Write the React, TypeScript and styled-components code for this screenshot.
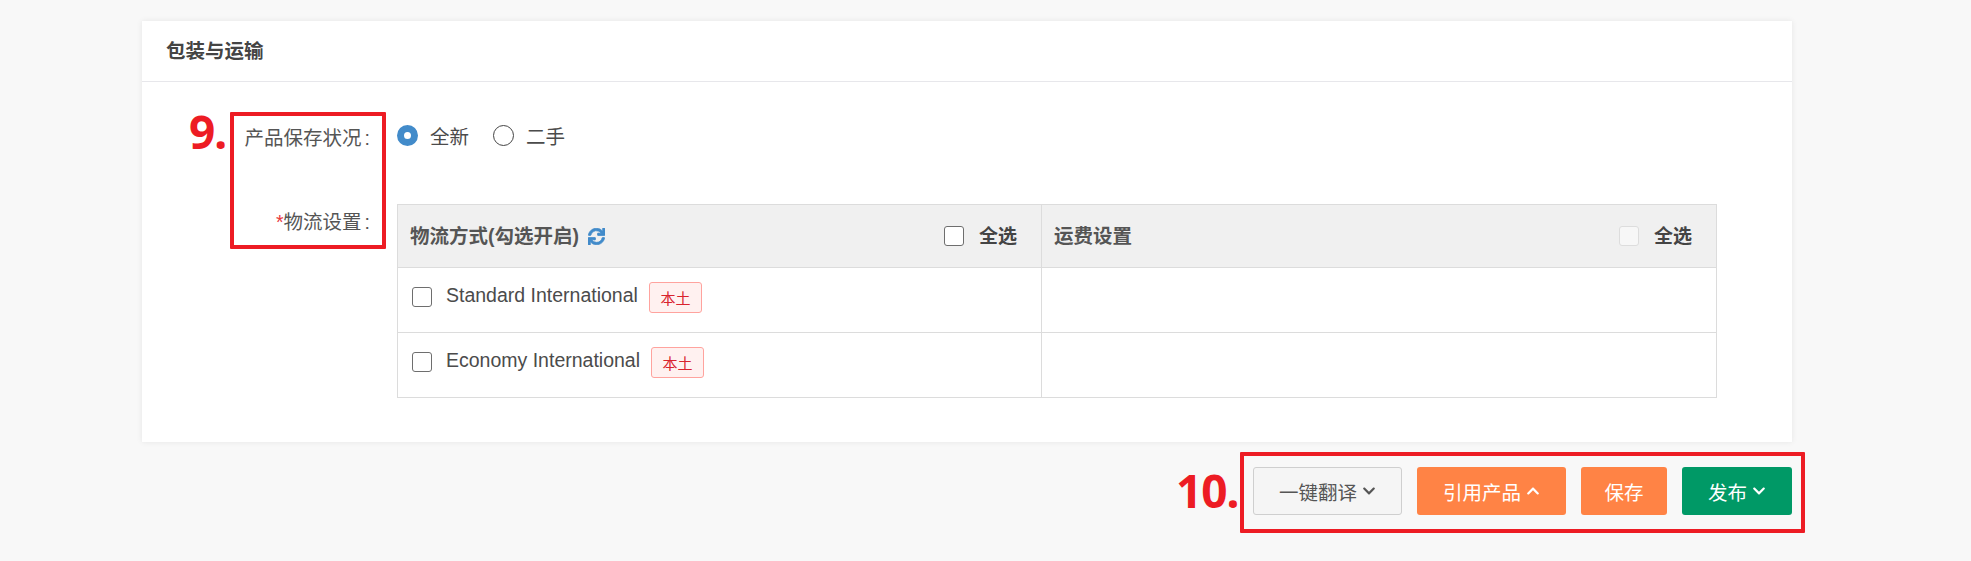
import React from "react";
import styled, { createGlobalStyle } from "styled-components";
import { FaChevronDown, FaChevronUp, FaSync } from "react-icons/fa";

const GlobalStyle = createGlobalStyle`
  html, body {
    margin: 0;
    padding: 0;
    background: #f8f8f8;
    font-family: "Liberation Sans", "Noto Sans CJK SC", sans-serif;
    color: #4b4b4b;
  }
`;

const Page = styled.div`
  position: relative;
  width: 1971px;
  height: 561px;
  padding: 21px 179px 0 142px;
  box-sizing: border-box;
  overflow: hidden;
`;

const Card = styled.section`
  background: #fff;
  height: 421px;
  box-shadow: 0 0 6px rgba(0, 0, 0, 0.08);
`;

const CardHeader = styled.header`
  height: 57px;
  padding: 0 0 3px 24px;
  display: flex;
  align-items: center;
  border-bottom: 1px solid #e7e7eb;
  font-size: 19.5px;
  font-weight: 700;
  color: #444;
`;

const CardBody = styled.div`
  padding-top: 34px;
  display: flex;
  flex-direction: column;
`;

const Field = styled.div<{ $height: number }>`
  display: grid;
  grid-template-columns: 228px 1fr;
  column-gap: 27px;
  height: ${(p) => p.$height}px;
`;

const FieldLabel = styled.label<{ $top: number }>`
  text-align: right;
  font-size: 19.5px;
  line-height: 28px;
  padding-top: ${(p) => p.$top}px;
  color: #555;
`;

const Required = styled.span`
  color: #e8383d;
`;

const Colon = styled.span`
  margin-left: 3px;
`;

const RadioRow = styled.div`
  display: flex;
  align-items: center;
  align-self: start;
  height: 28px;
  margin-top: 5px;
  gap: 24px;
`;

const RadioItem = styled.span`
  display: flex;
  align-items: center;
  gap: 12px;
  font-size: 19.5px;
`;

const RadioDot = styled.span<{ $on?: boolean }>`
  width: 21px;
  height: 21px;
  box-sizing: border-box;
  border-radius: 50%;
  background: #fff;
  border: ${(p) => (p.$on ? "7px solid #428bca" : "1px solid #444")};
`;

const ShipTable = styled.div`
  width: 1320px;
  height: 194px;
  border: 1px solid #dcdcdc;
  box-sizing: border-box;
`;

const TableRow = styled.div<{ $head?: boolean }>`
  display: grid;
  grid-template-columns: 643px 1fr;
  height: ${(p) => (p.$head ? 63 : 65)}px;
  box-sizing: border-box;
  background: ${(p) => (p.$head ? "#f0f0f0" : "#fff")};
  border-bottom: 1px solid #dcdcdc;
  &:last-child {
    border-bottom: 0;
    height: 64px;
  }
`;

const HeadCell = styled.div`
  display: flex;
  align-items: center;
  padding: 0 24px 0 12px;
  font-weight: 700;
  color: #555;
  & + & {
    border-left: 1px solid #dcdcdc;
  }
`;

const HeadTitle = styled.span`
  flex: 1;
  display: flex;
  align-items: center;
  gap: 9px;
  font-size: 19.5px;
`;

const HeadText = styled.span`
  position: relative;
  top: -2px;
`;

const SyncIcon = styled(FaSync)`
  color: #428bca;
  font-size: 17px;
  stroke: currentColor;
  stroke-width: 24;
`;

const SelectAll = styled.span`
  display: flex;
  align-items: center;
  gap: 15px;
  font-size: 19px;
  color: #444;
`;

const CheckBox = styled.span<{ $disabled?: boolean }>`
  width: 20px;
  height: 20px;
  flex: none;
  box-sizing: border-box;
  border-radius: 3px;
  background: ${(p) => (p.$disabled ? "#f7f7f7" : "#fff")};
  border: 1px solid ${(p) => (p.$disabled ? "#dddddd" : "#6e6e6e")};
`;

const MethodCell = styled.div`
  display: flex;
  align-items: center;
  padding: 0 0 6px 14px;
`;

const MethodName = styled.span`
  margin-left: 14px;
  font-size: 19.5px;
  position: relative;
  top: -2px;
`;

const LocalTag = styled.span`
  margin-left: 11px;
  width: 53px;
  height: 31px;
  box-sizing: border-box;
  display: flex;
  align-items: center;
  justify-content: center;
  font-size: 15px;
  color: #d9232d;
  background: #fff1f0;
  border: 1px solid #ffa39e;
  border-radius: 3px;
`;

const RateCell = styled.div`
  border-left: 1px solid #dcdcdc;
`;

const ActionBar = styled.div`
  display: flex;
  justify-content: flex-end;
  gap: 15px;
  margin-top: 25px;
`;

const ActionButton = styled.button<{ $tone: "plain" | "orange" | "green"; $width: number }>`
  width: ${(p) => p.$width}px;
  height: 48px;
  padding: 0;
  display: flex;
  align-items: center;
  justify-content: center;
  gap: 5px;
  font-family: inherit;
  font-size: 19.5px;
  border-radius: 3px;
  box-sizing: border-box;
  border: ${(p) => (p.$tone === "plain" ? "1px solid #cfcfcf" : "0")};
  color: ${(p) => (p.$tone === "plain" ? "#555" : "#fff")};
  background: ${(p) =>
    p.$tone === "plain" ? "#f5f5f5" : p.$tone === "orange" ? "#ff8345" : "#009966"};

  svg {
    font-size: 14px;
  }
`;

const Mark = styled.div<{ $x: number; $y: number; $w: number; $h: number }>`
  position: absolute;
  left: ${(p) => p.$x}px;
  top: ${(p) => p.$y}px;
  width: ${(p) => p.$w}px;
  height: ${(p) => p.$h}px;
  box-sizing: border-box;
  border: 4px solid #ed1c24;
  border-radius: 1px;
`;

const MarkNumber = styled.div<{ $x: number; $y: number }>`
  position: absolute;
  left: ${(p) => p.$x}px;
  top: ${(p) => p.$y}px;
  font-family: "Noto Sans", sans-serif;
  font-weight: 700;
  font-size: 46px;
  line-height: 50px;
  letter-spacing: -1px;
  color: #ed1c24;
`;

function App() {
  return (
    <Page>
      <GlobalStyle />
      <Card>
        <CardHeader>包装与运输</CardHeader>
        <CardBody>
          <Field $height={88}>
            <FieldLabel $top={8}>
              产品保存状况<Colon>:</Colon>
            </FieldLabel>
            <RadioRow>
              <RadioItem>
                <RadioDot $on />
                全新
              </RadioItem>
              <RadioItem>
                <RadioDot />
                二手
              </RadioItem>
            </RadioRow>
          </Field>
          <Field $height={194}>
            <FieldLabel $top={4}>
              <Required>*</Required>物流设置<Colon>:</Colon>
            </FieldLabel>
            <ShipTable>
              <TableRow $head>
                <HeadCell>
                  <HeadTitle>
                    <HeadText>物流方式(勾选开启)</HeadText>
                    <SyncIcon />
                  </HeadTitle>
                  <SelectAll>
                    <CheckBox />
                    <HeadText>全选</HeadText>
                  </SelectAll>
                </HeadCell>
                <HeadCell>
                  <HeadTitle>
                    <HeadText>运费设置</HeadText>
                  </HeadTitle>
                  <SelectAll>
                    <CheckBox $disabled />
                    <HeadText>全选</HeadText>
                  </SelectAll>
                </HeadCell>
              </TableRow>
              <TableRow>
                <MethodCell>
                  <CheckBox />
                  <MethodName>Standard International</MethodName>
                  <LocalTag>本土</LocalTag>
                </MethodCell>
                <RateCell />
              </TableRow>
              <TableRow>
                <MethodCell>
                  <CheckBox />
                  <MethodName>Economy International</MethodName>
                  <LocalTag>本土</LocalTag>
                </MethodCell>
                <RateCell />
              </TableRow>
            </ShipTable>
          </Field>
        </CardBody>
      </Card>
      <ActionBar>
        <ActionButton $tone="plain" $width={149}>
          一键翻译
          <FaChevronDown />
        </ActionButton>
        <ActionButton $tone="orange" $width={149}>
          引用产品
          <FaChevronUp />
        </ActionButton>
        <ActionButton $tone="orange" $width={86}>
          保存
        </ActionButton>
        <ActionButton $tone="green" $width={110}>
          发布
          <FaChevronDown />
        </ActionButton>
      </ActionBar>
      <Mark $x={230} $y={112} $w={156} $h={137} />
      <MarkNumber $x={189} $y={106}>9.</MarkNumber>
      <Mark $x={1240} $y={452} $w={565} $h={81} />
      <MarkNumber $x={1176} $y={465}>10.</MarkNumber>
    </Page>
  );
}

export default App;
